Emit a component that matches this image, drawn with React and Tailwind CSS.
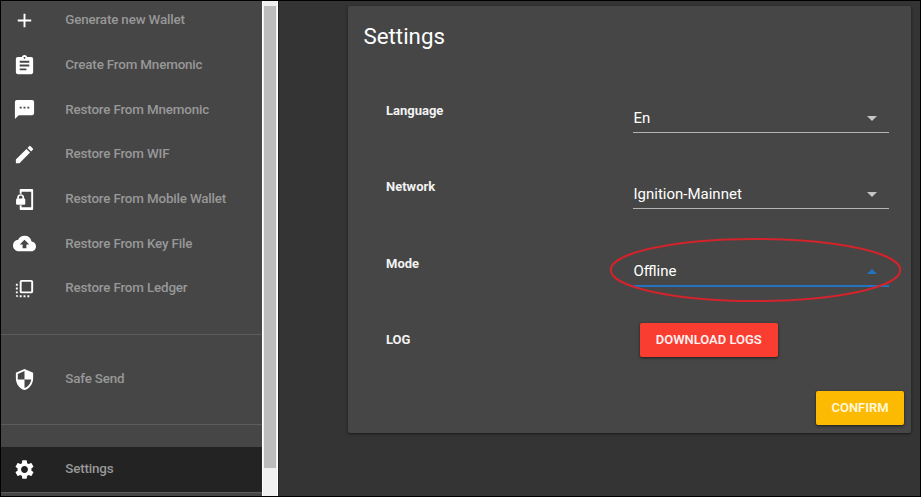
import {
  MdAdd, MdAssignment, MdTextsms, MdEdit, MdBackup,
  MdFlipToFront, MdSecurity, MdSettings,
} from "react-icons/md";

function PhoneLockIcon({ className }) {
  return (
    <svg viewBox="0 0 24 24" fill="currentColor" className={className}>
      <path d="M20.2 1H7.8C7.4 1 7 1.4 7 1.8V6h2V4h10v16H9v-2H7v4.2c0 .4.4.8.8.8h12.4c.4 0 .8-.4.8-.8V1.8c0-.4-.4-.8-.8-.8z" />
      <path d="M11.6 11V9.5C11.6 7.8 9.9 6.4 8 6.4S4.4 7.8 4.4 9.5V11c-.6 0-1.2.6-1.2 1.2v4.1c0 .7.6 1.3 1.2 1.3h7.1c.7 0 1.3-.6 1.3-1.2v-4.1c0-.7-.6-1.3-1.2-1.3zm-1.8 0H6.2V9.5c0-.8.9-1.4 1.8-1.4s1.8.6 1.8 1.4V11z" />
    </svg>
  );
}

const walletItems = [
  { icon: MdAdd, label: "Generate new Wallet" },
  { icon: MdAssignment, label: "Create From Mnemonic" },
  { icon: MdTextsms, label: "Restore From Mnemonic" },
  { icon: MdEdit, label: "Restore From WIF" },
  { icon: PhoneLockIcon, label: "Restore From Mobile Wallet" },
  { icon: MdBackup, label: "Restore From Key File" },
  { icon: MdFlipToFront, label: "Restore From Ledger" },
];

function NavItem({ icon: Icon, label, active }) {
  return (
    <li className={`flex h-[44.7px] shrink-0 items-center pl-3 ${active ? "bg-[#232323]" : ""}`}>
      <Icon className="size-[23px] shrink-0 text-white" />
      <span className="ml-[29.3px] text-[13.4px] leading-5 font-medium tracking-[-0.17px] whitespace-nowrap text-[#989898]">
        {label}
      </span>
    </li>
  );
}

function Sidebar() {
  return (
    <nav className="flex w-[261px] shrink-0 flex-col overflow-hidden bg-[#464646]">
      <ul className="-mt-[3px] flex shrink-0 flex-col">
        {walletItems.map((item) => (
          <NavItem key={item.label} {...item} />
        ))}
      </ul>
      <hr className="mt-[23px] mb-[22px] shrink-0 border-[#5c5c5c]" />
      <ul className="shrink-0">
        <NavItem icon={MdSecurity} label="Safe Send" />
      </ul>
      <hr className="mt-[22.5px] mb-[22px] shrink-0 border-[#5c5c5c]" />
      <ul className="shrink-0">
        <NavItem icon={MdSettings} label="Settings" active />
      </ul>
      <hr className="shrink-0 border-[#5c5c5c]" />
    </nav>
  );
}

function Field({ label, children }) {
  return (
    <div className="flex h-[76.4px]">
      <div className="w-[247px] pt-[16.8px] text-[13px] leading-4 font-bold text-[#f2f2f2]">{label}</div>
      {children}
    </div>
  );
}

function Select({ value, open }) {
  return (
    <div className={`mt-[22px] flex w-[256px] items-start justify-between pr-[12px] ${open ? "h-[26px] border-b-2 border-[#2473c0]" : "h-[25px] border-b border-[#b4b4b4]"}`}>
      <span className="pl-[0.5px] text-[15px] leading-[21px] text-white">{value}</span>
      <svg viewBox="0 0 10 5" className={`mt-2 h-[5px] w-[10px] ${open ? "rotate-180 fill-[#2473c0]" : "fill-[#c6c6c6]"}`}>
        <path d="M0 0h10L5 5z" />
      </svg>
    </div>
  );
}

export default function App() {
  return (
    <div className="flex h-[497px] w-[921px] overflow-hidden border border-black bg-[#343434] font-['Roboto',sans-serif]">
      <Sidebar />
      <div className="w-4 shrink-0 border-x border-white bg-[#f0f0f0] px-px pt-[5px]">
        <div className="h-[462px] bg-[#bcbcbc]" />
      </div>
      <main className="flex-1 border-l border-[#222] pt-[5px] pl-[69px]">
        <section className="relative flex h-[427px] w-[563px] flex-col rounded-[2px] bg-[#464646] shadow-[0_1px_3px_rgba(0,0,0,0.55)]">
          <h1 className="pt-[15px] pl-[15.5px] text-[22.3px] leading-[30px] text-white">Settings</h1>
          <div className="mt-[35px] pl-[38px]">
            <Field label="Language"><Select value="En" /></Field>
            <Field label="Network"><Select value="Ignition-Mainnet" /></Field>
            <Field label="Mode">
              <div className="relative">
                <Select value="Offline" open />
                <svg viewBox="0 0 294 66" className="pointer-events-none absolute -top-[2px] -left-[25px] h-[66px] w-[294px]">
                  <ellipse cx="147.5" cy="33" rx="144.8" ry="31" fill="none" stroke="#d3232b" strokeWidth="2" />
                </svg>
              </div>
            </Field>
            <div className="flex">
              <div className="w-[254px] pt-[17px] text-[13px] leading-4 font-bold text-[#f2f2f2]">LOG</div>
              <button className="mt-[7.5px] h-[34px] w-[137.5px] rounded-[2px] bg-[#f93d31] text-[13px] font-semibold tracking-[-0.02px] text-[#fff0ee] shadow-[0_1px_3px_rgba(0,0,0,0.6)]">
                DOWNLOAD LOGS
              </button>
            </div>
          </div>
          <button className="mt-auto mr-[7px] mb-2 h-[34px] w-[88px] self-end rounded-[2px] bg-[#fdba02] text-[13px] font-semibold tracking-[-0.02px] text-[#fff8dc] shadow-[0_1px_3px_rgba(0,0,0,0.6)]">
            CONFIRM
          </button>
        </section>
      </main>
    </div>
  );
}
